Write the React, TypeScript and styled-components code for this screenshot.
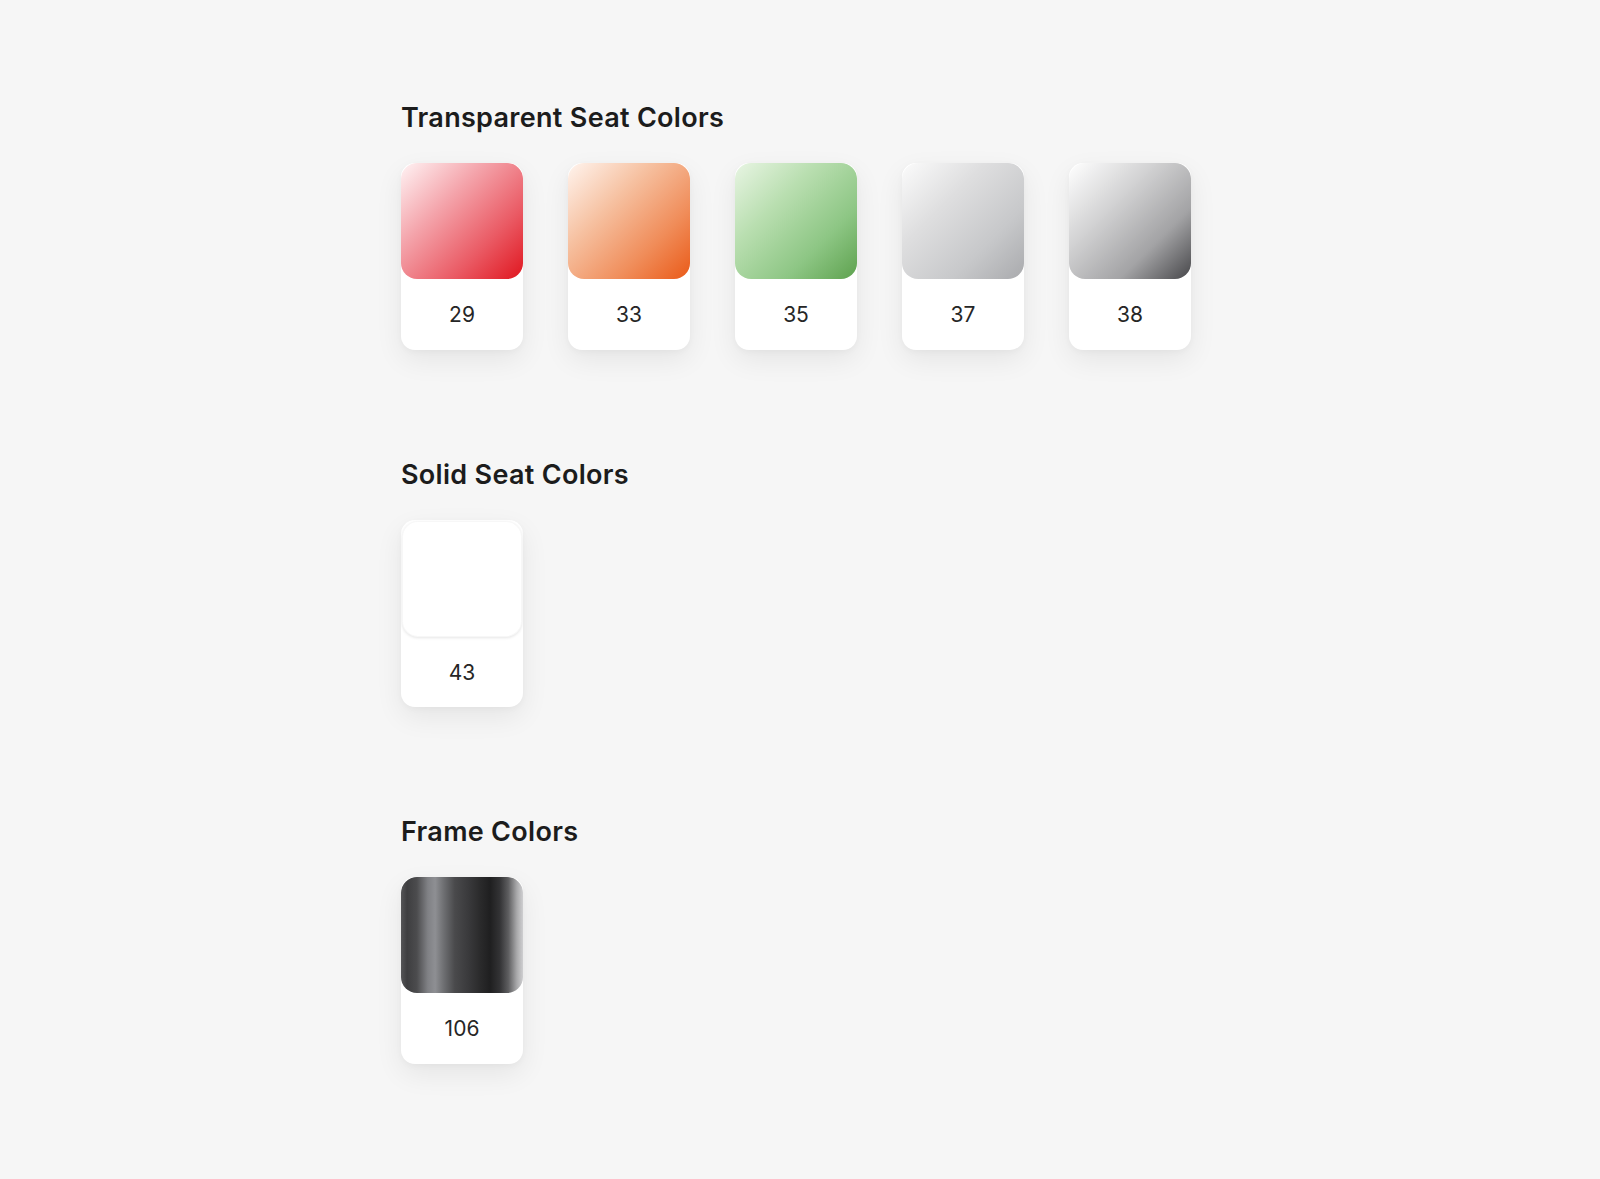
import React from "react";
import styled, { createGlobalStyle } from "styled-components";

const GlobalStyle = createGlobalStyle`
  html, body {
    margin: 0;
    padding: 0;
    background: #f6f6f6;
  }
  body {
    font-family: Inter, "Noto Sans", "Liberation Sans", sans-serif;
    color: #1d1d1f;
  }
`;

const Page = styled.main`
  min-height: 1179px;
  box-sizing: border-box;
  padding: 102px 0 0 401px;
  display: flex;
  flex-direction: column;
  gap: 109px;
`;

const Section = styled.section`
  display: flex;
  flex-direction: column;
  gap: 29px;
`;

const Heading = styled.h2`
  margin: 0;
  font-size: 27px;
  line-height: 32px;
  font-weight: 600;
  letter-spacing: 0.3px;
  color: #1c1c1c;
`;

const Row = styled.div`
  display: flex;
  gap: 45px;
`;

const Card = styled.div`
  width: 122px;
  height: 187px;
  background: #ffffff;
  border-radius: 14px;
  box-shadow: 0 10px 28px rgba(0, 0, 0, 0.07), 0 2px 6px rgba(0, 0, 0, 0.03);
  display: flex;
  flex-direction: column;
  overflow: hidden;
`;

const Swatch = styled.div<{ $bg: string; $outlined?: boolean }>`
  height: 116px;
  flex: none;
  border-radius: 16px;
  background: ${(p) => p.$bg};
  box-shadow: ${(p) =>
    p.$outlined
      ? "0 1px 3px rgba(0,0,0,0.10), inset 0 0 0 1px rgba(0,0,0,0.03)"
      : "none"};
  margin: ${(p) => (p.$outlined ? "1px 1px 0" : "0")};
`;

const Label = styled.div`
  flex: 1;
  display: flex;
  align-items: center;
  justify-content: center;
  font-size: 21px;
  font-weight: 400;
  color: #262626;
`;

type Item = { code: string; bg: string; outlined?: boolean };

const transparent: Item[] = [
  { code: "29", bg: "linear-gradient(135deg, #fff3f4 0%, #f4a4ab 35%, #ea5a64 70%, #e0161f 100%)" },
  { code: "33", bg: "linear-gradient(135deg, #fff4ee 0%, #f6c1a1 35%, #f08d5a 70%, #ea5a18 100%)" },
  { code: "35", bg: "linear-gradient(135deg, #e8f5e3 0%, #b8deaf 35%, #8dc684 70%, #5ea24f 100%)" },
  { code: "37", bg: "linear-gradient(135deg, #fbfbfb 0%, #dededf 35%, #c7c8ca 70%, #a9aaad 100%)" },
  { code: "38", bg: "linear-gradient(135deg, #ffffff 0%, #d3d3d4 35%, #a3a3a5 70%, #47474a 100%)" },
];

const solid: Item[] = [{ code: "43", bg: "#ffffff", outlined: true }];

const frame: Item[] = [
  {
    code: "106",
    bg: "linear-gradient(90deg, #555557 0%, #3e3e40 5%, #4c4c4e 13%, #808185 22%, #8e8f93 28%, #6e6f72 35%, #4a4a4c 44%, #3a3a3c 55%, #2a2a2b 65%, #1f1f20 73%, #333335 81%, #5e5e60 88%, #a9a9ab 95%, #cfcfd1 100%)",
  },
];

const SwatchSection = ({ title, items }: { title: string; items: Item[] }) => (
  <Section>
    <Heading>{title}</Heading>
    <Row>
      {items.map((it) => (
        <Card key={it.code}>
          <Swatch $bg={it.bg} $outlined={it.outlined} />
          <Label>{it.code}</Label>
        </Card>
      ))}
    </Row>
  </Section>
);

export default function App() {
  return (
    <>
      <GlobalStyle />
      <Page>
        <SwatchSection title="Transparent Seat Colors" items={transparent} />
        <SwatchSection title="Solid Seat Colors" items={solid} />
        <SwatchSection title="Frame Colors" items={frame} />
      </Page>
    </>
  );
}
